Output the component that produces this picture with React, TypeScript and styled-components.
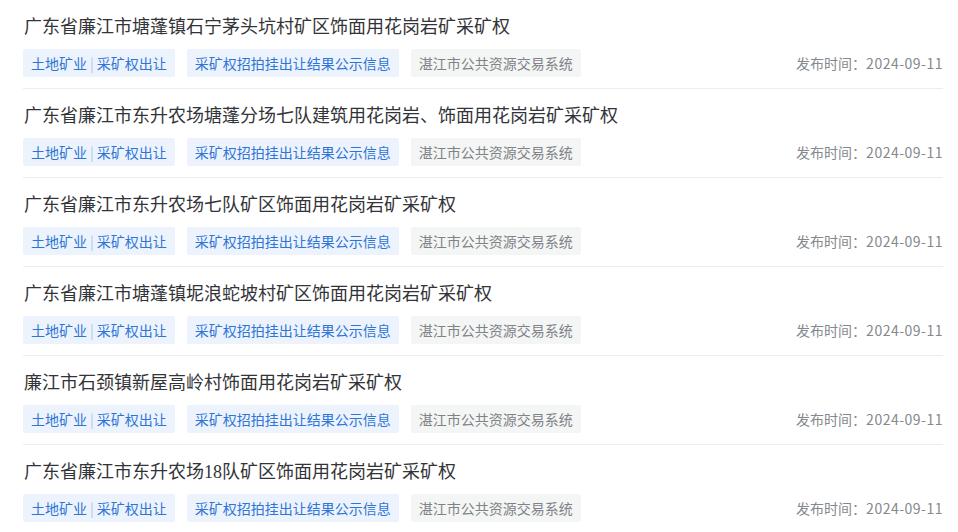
import styled, { createGlobalStyle } from 'styled-components';

const GlobalStyle = createGlobalStyle`
  body {
    margin: 0;
    background: #ffffff;
    font-family: 'Noto Sans CJK SC', 'Noto Sans', sans-serif;
  }
`;

const ITEMS = [
  '广东省廉江市塘蓬镇石宁茅头坑村矿区饰面用花岗岩矿采矿权',
  '广东省廉江市东升农场塘蓬分场七队建筑用花岗岩、饰面用花岗岩矿采矿权',
  '广东省廉江市东升农场七队矿区饰面用花岗岩矿采矿权',
  '广东省廉江市塘蓬镇坭浪蛇坡村矿区饰面用花岗岩矿采矿权',
  '廉江市石颈镇新屋高岭村饰面用花岗岩矿采矿权',
  '广东省廉江市东升农场18队矿区饰面用花岗岩矿采矿权',
];

const List = styled.ul`
  list-style: none;
  margin: 0;
  padding: 0 15px 0 23px;
`;

const Row = styled.li`
  padding: 15px 0 11px;
  border-bottom: 1px solid #ebedf0;
`;

const Title = styled.div`
  font-family: 'Liberation Serif', 'Noto Sans CJK SC', serif;
  font-size: 18px;
  line-height: 24px;
  color: #333438;
  padding-left: 1px;
`;

const Meta = styled.div`
  display: flex;
  align-items: center;
  margin-top: 10px;
`;

const Tags = styled.div`
  display: flex;
  gap: 12px;
  flex: 1;
`;

const Tag = styled.span<{ $tone: 'blue' | 'gray' }>`
  display: inline-flex;
  align-items: center;
  height: 28px;
  padding: 0 8px;
  border-radius: 2px;
  font-size: 14px;
  background: ${(p) => (p.$tone === 'blue' ? '#ecf3fd' : '#f4f5f5')};
  color: ${(p) => (p.$tone === 'blue' ? '#2f75d6' : '#7f8387')};
`;

const Pipe = styled.span`
  color: #a9c8f0;
  margin: 0 3px;
`;

const Date = styled.span`
  font-size: 14px;
  color: #85888c;
`;

const Digits = styled.span`
  letter-spacing: 0.5px;
`;

export default function App() {
  return (
    <>
      <GlobalStyle />
      <List>
        {ITEMS.map((title, i) => (
          <Row key={i}>
            <Title>{title}</Title>
            <Meta>
              <Tags>
                <Tag $tone="blue">
                  土地矿业<Pipe>|</Pipe>采矿权出让
                </Tag>
                <Tag $tone="blue">采矿权招拍挂出让结果公示信息</Tag>
                <Tag $tone="gray">湛江市公共资源交易系统</Tag>
              </Tags>
              <Date>
                发布时间：<Digits>2024-09-11</Digits>
              </Date>
            </Meta>
          </Row>
        ))}
      </List>
    </>
  );
}
